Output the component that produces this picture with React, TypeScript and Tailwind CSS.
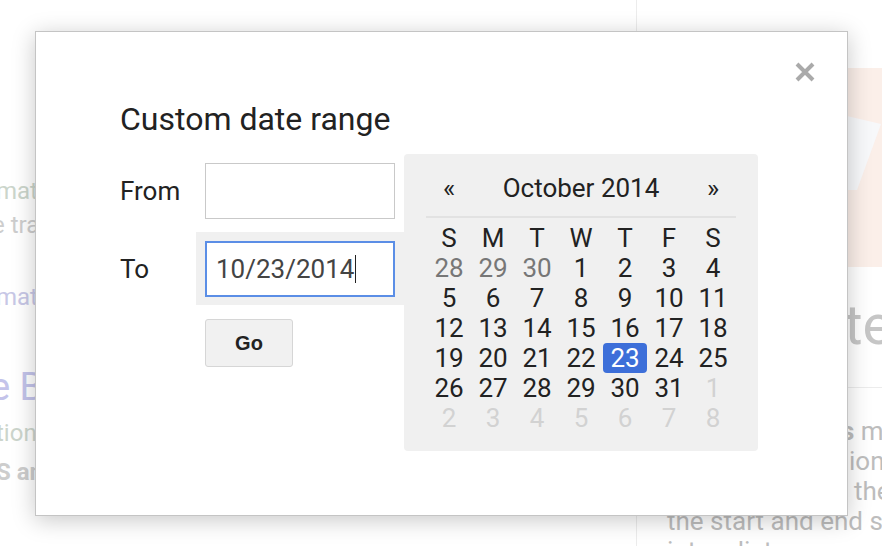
import React from "react";

type Day = { d: number; t: "p" | "c" | "n" };

const rows: Day[][] = [
  [{ d: 28, t: "p" }, { d: 29, t: "p" }, { d: 30, t: "p" }, { d: 1, t: "c" }, { d: 2, t: "c" }, { d: 3, t: "c" }, { d: 4, t: "c" }],
  [5, 6, 7, 8, 9, 10, 11].map((d) => ({ d, t: "c" as const })),
  [12, 13, 14, 15, 16, 17, 18].map((d) => ({ d, t: "c" as const })),
  [19, 20, 21, 22, 23, 24, 25].map((d) => ({ d, t: "c" as const })),
  [...[26, 27, 28, 29, 30, 31].map((d) => ({ d, t: "c" as const })), { d: 1, t: "n" as const }],
  [2, 3, 4, 5, 6, 7, 8].map((d) => ({ d, t: "n" as const })),
];

const weekdays = ["S", "M", "T", "W", "T", "F", "S"];

function Calendar() {
  return (
    <div className="w-[354px] bg-[#f0f0f0] rounded-[4px] pt-[19px] pb-[18px] px-[23px] text-[26px] text-[#222]">
      <div className="flex h-[30px] items-center leading-[30px]">
        <div className="w-[44px] text-center">«</div>
        <div className="w-[220px] text-center">October 2014</div>
        <div className="w-[44px] text-center">»</div>
      </div>
      <div className="mt-[13px] h-[2px] bg-[#e2e2e2] mx-[-1px]" />
      <div className="mt-[5px] flex">
        {weekdays.map((w, i) => (
          <div key={i} className="w-[44px] h-[30px] leading-[30px] text-center">
            {w}
          </div>
        ))}
      </div>
      {rows.map((r, ri) => (
        <div key={ri} className="flex">
          {r.map((c, ci) => {
            const sel = c.t === "c" && c.d === 23;
            const cls = sel
              ? "bg-[#3d6fd9] text-white rounded-[4px]"
              : c.t === "p"
              ? "text-[#777]"
              : c.t === "n"
              ? "text-[#d2d2d2]"
              : "text-[#222]";
            return (
              <div key={ci} className={`w-[44px] h-[30px] leading-[30px] text-center ${cls}`}>
                {c.d}
              </div>
            );
          })}
        </div>
      ))}
    </div>
  );
}

function Dialog() {
  return (
    <div className="absolute left-[35px] top-[31px] w-[813px] h-[485px] bg-white border border-[#c4c4c4] shadow-[0_4px_22px_rgba(0,0,0,0.22)]">
      <button className="absolute right-[31px] top-[29px] w-[22px] h-[22px]" aria-label="Close">
        <svg width="22" height="22" viewBox="0 0 22 22">
          <path d="M3 3 L19 19 M19 3 L3 19" stroke="#aaaaaa" strokeWidth="4" strokeLinecap="butt" />
        </svg>
      </button>
      <div className="pl-[84px] pt-[69px]">
        <div className="text-[32px] leading-[36px] text-[#222]">Custom date range</div>
        <div className="mt-[17px] flex items-start">
          <div className="w-[284px] pt-[9px] text-[26px] text-[#222]">
            <div className="flex items-center h-[56px]">
              <div className="w-[85px]">From</div>
              <div className="w-[190px] h-[56px] border border-[#c9c9c9] bg-white" />
            </div>
            <div className="mt-[13px] flex items-center">
              <div className="w-[76px] pt-[1px]">To</div>
              <div className="bg-[#f0f0f0] pl-[9px] pr-[9px] pt-[9px] pb-[8px]">
                <div className="w-[190px] h-[56px] border-2 border-[#5b8ee6] bg-white flex items-center pl-[9px] text-[#444]">
                  <span>10/23/2014</span>
                  <span className="inline-block w-[1px] h-[28px] bg-[#222] ml-[1px]" />
                </div>
              </div>
            </div>
            <button className="mt-[14px] ml-[85px] w-[88px] h-[48px] bg-[#f1f1f1] border border-[#d6d6d6] rounded-[3px] font-['Liberation_Sans',Arial,sans-serif] font-bold text-[20px] text-[#222]">
              Go
            </button>
          </div>
          <Calendar />
        </div>
      </div>
    </div>
  );
}

function Background() {
  return (
    <div className="flex w-[882px] h-[546px]">
      <div className="w-[637px] shrink-0 border-r border-[#ececec] overflow-hidden">
        <div className="pt-[177px] text-[24px] leading-[28px] whitespace-nowrap">
          <div className="ml-[-4px] text-[#cbd5cb]">mation</div>
          <div className="mt-[6px] ml-[-8px] text-[#cdcdcd]">e traffic</div>
          <div className="mt-[44px] ml-[-4px] text-[#c7c7e6]">mation</div>
          <div className="mt-[54px] ml-[-10px] text-[38px] leading-[44px] text-[#c3c3ea]">e Basics</div>
          <div className="mt-[10px] ml-[-4px] text-[#ccd5cc]">tion</div>
          <div className="mt-[11px] ml-[-4px] font-bold text-[#cdcdcd]">S and</div>
        </div>
      </div>
      <div className="flex-1 overflow-hidden">
        <div className="mt-[68px] ml-[30px] h-[199px] w-[300px] bg-[#fbefe9] relative">
          <svg className="absolute left-[180px] top-[48px]" width="40" height="80" viewBox="0 0 40 80">
            <polygon points="0,0 34,8 10,74 0,74" fill="#f7f8fa" />
          </svg>
        </div>
        <div className="mt-[26px] ml-[140px] text-[56px] leading-[64px] text-[#c6c6c6] whitespace-nowrap">Date</div>
        <div className="mt-[30px] border-t border-[#ececec]" />
        <div className="pt-[28px] pl-[30px] text-[26px] leading-[30px] text-[#bdbdbd] whitespace-nowrap">
          <div className="pl-[174px]"><span className="font-bold">s</span> m</div>
          <div className="pl-[182px]">ion</div>
          <div className="pl-[187px]">the</div>
          <div>the start and end s</div>
          <div>into a list</div>
        </div>
      </div>
    </div>
  );
}

export default function App() {
  return (
    <div className="relative w-[882px] h-[546px] overflow-hidden bg-white font-['Roboto',sans-serif]">
      <Background />
      <Dialog />
    </div>
  );
}
